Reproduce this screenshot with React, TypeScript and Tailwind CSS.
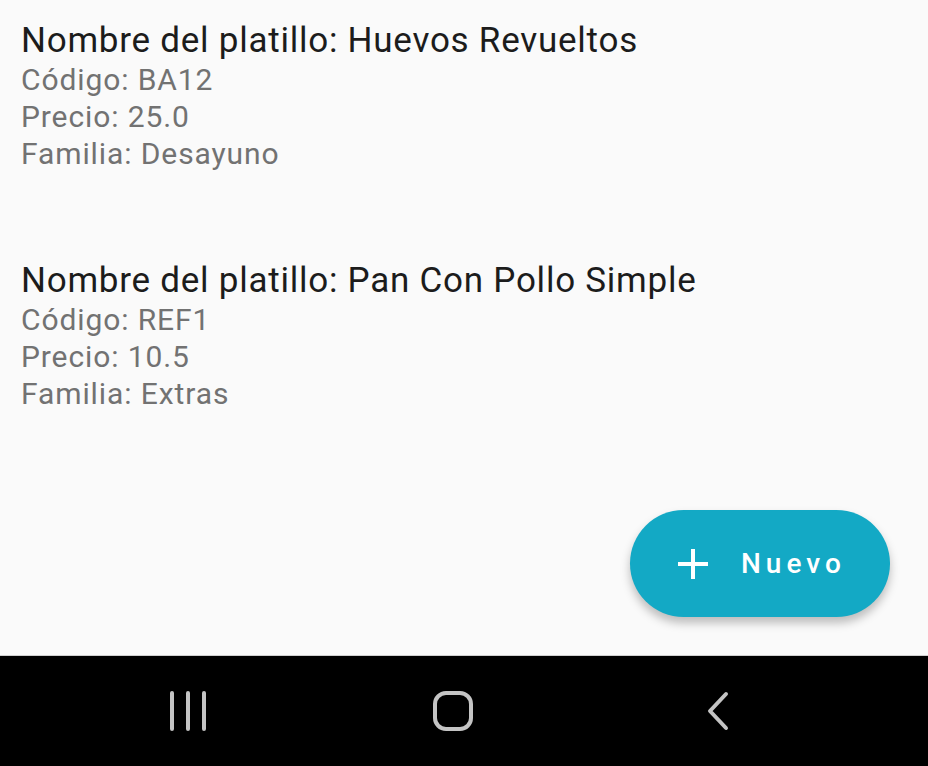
export default function App() {
  const dishes = [
    { name: "Huevos Revueltos", code: "BA12", price: "25.0", family: "Desayuno" },
    { name: "Pan Con Pollo Simple", code: "REF1", price: "10.5", family: "Extras" },
  ]

  return (
    <div className="flex h-[766px] w-[928px] flex-col bg-[#fafafa] font-['Roboto',sans-serif]">
      <div className="relative flex-1">
        <div className="flex flex-col gap-[89px] pl-[21px] pt-[21px]">
          {dishes.map((d) => (
            <div key={d.code} className="flex flex-col">
              <div className="text-[35px] leading-[40px] tracking-[0.75px] text-[#1c1c1c]">Nombre del platillo: {d.name}</div>
              <div className="text-[30px] leading-[37px] tracking-[0.9px] text-[#727272]">Código: {d.code}</div>
              <div className="text-[30px] leading-[37px] tracking-[0.9px] text-[#727272]">Precio: {d.price}</div>
              <div className="text-[30px] leading-[37px] tracking-[0.9px] text-[#727272]">Familia: {d.family}</div>
            </div>
          ))}
        </div>

        <button className="absolute left-[630px] top-[510px] flex h-[107px] w-[260px] items-center rounded-full bg-[#13a9c5] pl-[46px] shadow-[0_6px_10px_rgba(0,0,0,0.25)]">
          <svg width="34" height="34" viewBox="0 0 34 34">
            <path d="M17 2v30M2 17h30" stroke="white" strokeWidth="4" />
          </svg>
          <span className="ml-[31px] text-[28px] font-medium tracking-[5px] text-white">Nuevo</span>
        </button>
      </div>

      <div className="flex h-[111px] items-center border-t border-[#d0d0d0] bg-black">
        <div className="flex w-full items-center">
          <div className="flex w-[376px] justify-center">
            <svg width="38" height="40" viewBox="0 0 38 40">
              <path d="M3 2v36M19 2v36M35 2v36" stroke="#c4c4c4" strokeWidth="4" strokeLinecap="round" />
            </svg>
          </div>
          <div className="flex w-[154px] justify-center">
            <div className="h-[40px] w-[40px] rounded-[13px] border-[4px] border-[#c4c4c4]" />
          </div>
          <div className="flex w-[376px] justify-center">
            <svg width="26" height="40" viewBox="0 0 26 40">
              <path d="M21 3L5 20l16 17" stroke="#c4c4c4" strokeWidth="4" fill="none" strokeLinecap="round" strokeLinejoin="round" />
            </svg>
          </div>
        </div>
      </div>
    </div>
  )
}
